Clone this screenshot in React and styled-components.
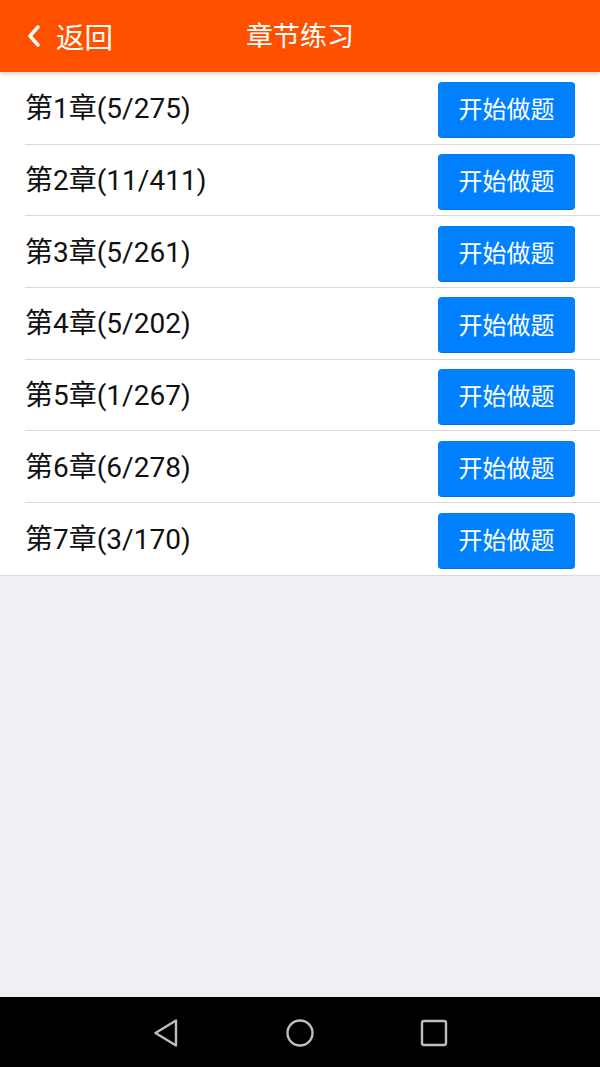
import styled, { createGlobalStyle } from 'styled-components';

const GlobalStyle = createGlobalStyle`
    html, body {
        margin: 0;
        padding: 0;
        background: #efeff4;
    }
    * {
        box-sizing: border-box;
    }
`

const Page = styled.div`
    width: 600px;
    height: 1067px;
    display: flex;
    flex-direction: column;
    background: #efeff4;
    font-family: Roboto, "Noto Sans CJK SC", sans-serif;
`

const Header = styled.header`
    position: relative;
    z-index: 1;
    height: 72px;
    flex-shrink: 0;
    display: grid;
    grid-template-columns: 1fr auto 1fr;
    align-items: center;
    background: #ff5000;
    color: #fff;
    box-shadow: 0 2px 4px rgba(0, 0, 0, 0.18);
`

const Back = styled.div`
    display: flex;
    align-items: center;
    gap: 15px;
    padding-left: 27px;
    font-size: 28.5px;
    padding-bottom: 1px;
`

const Title = styled.div`
    font-size: 27px;
    padding-bottom: 4px;
`

const List = styled.ul`
    list-style: none;
    margin: 0;
    padding: 0;
    background: #fff;
    border-bottom: 1px solid #d9d9dc;
`

const Row = styled.li`
    height: 71.7px;
    margin-left: 25px;
    padding-right: 25px;
    display: flex;
    align-items: center;
    justify-content: space-between;
    border-bottom: ${p => (p.$last ? 'none' : '1px solid #d9d9dc')};
    &:first-child {
        height: 72.5px;
    }
`

const Label = styled.span`
    font-size: 28px;
    color: #111;
    padding-bottom: 4px;
`

const StartButton = styled.button`
    width: 137px;
    height: 55px;
    margin-top: 3px;
    border: none;
    border-radius: 4px;
    background: #0080ff;
    color: #fff;
    font-family: inherit;
    font-size: 24px;
    padding: 0 0 3px;
    box-shadow: 0 1px 0 #0a6ed8;
`

const Spacer = styled.div`
    flex: 1;
`

const NavBar = styled.nav`
    height: 70px;
    flex-shrink: 0;
    background: #000;
    display: flex;
    align-items: center;
    justify-content: center;
    gap: 98px;
    padding-top: 1px;
`

const chapters = [
    [1, 5, 275],
    [2, 11, 411],
    [3, 5, 261],
    [4, 5, 202],
    [5, 1, 267],
    [6, 6, 278],
    [7, 3, 170],
]

function App() {
    return (
        <Page>
            <GlobalStyle />
            <Header>
                <Back>
                    <svg width="14" height="22" viewBox="0 0 14 22">
                        <path d="M11 2 L3 11 L11 20" fill="none" stroke="#fff" strokeWidth="3.4" strokeLinecap="round" strokeLinejoin="round" />
                    </svg>
                    <span>返回</span>
                </Back>
                <Title>章节练习</Title>
                <div />
            </Header>
            <List>
                {chapters.map(([n, done, total], i) => (
                    <Row key={n} $last={i === chapters.length - 1}>
                        <Label>第{n}章({done}/{total})</Label>
                        <StartButton>开始做题</StartButton>
                    </Row>
                ))}
            </List>
            <Spacer />
            <NavBar>
                <svg width="36" height="36" viewBox="0 0 36 36">
                    <path d="M28 5.5 L7.5 18 L28 30.5 Z" fill="none" stroke="#bdbdbd" strokeWidth="2.4" strokeLinejoin="round" />
                </svg>
                <svg width="36" height="36" viewBox="0 0 36 36">
                    <circle cx="18" cy="18" r="12.5" fill="none" stroke="#bdbdbd" strokeWidth="2.4" />
                </svg>
                <svg width="36" height="36" viewBox="0 0 36 36">
                    <rect x="6" y="6" width="24" height="24" rx="2" fill="none" stroke="#bdbdbd" strokeWidth="2.4" />
                </svg>
            </NavBar>
        </Page>
    )
}

export default App
